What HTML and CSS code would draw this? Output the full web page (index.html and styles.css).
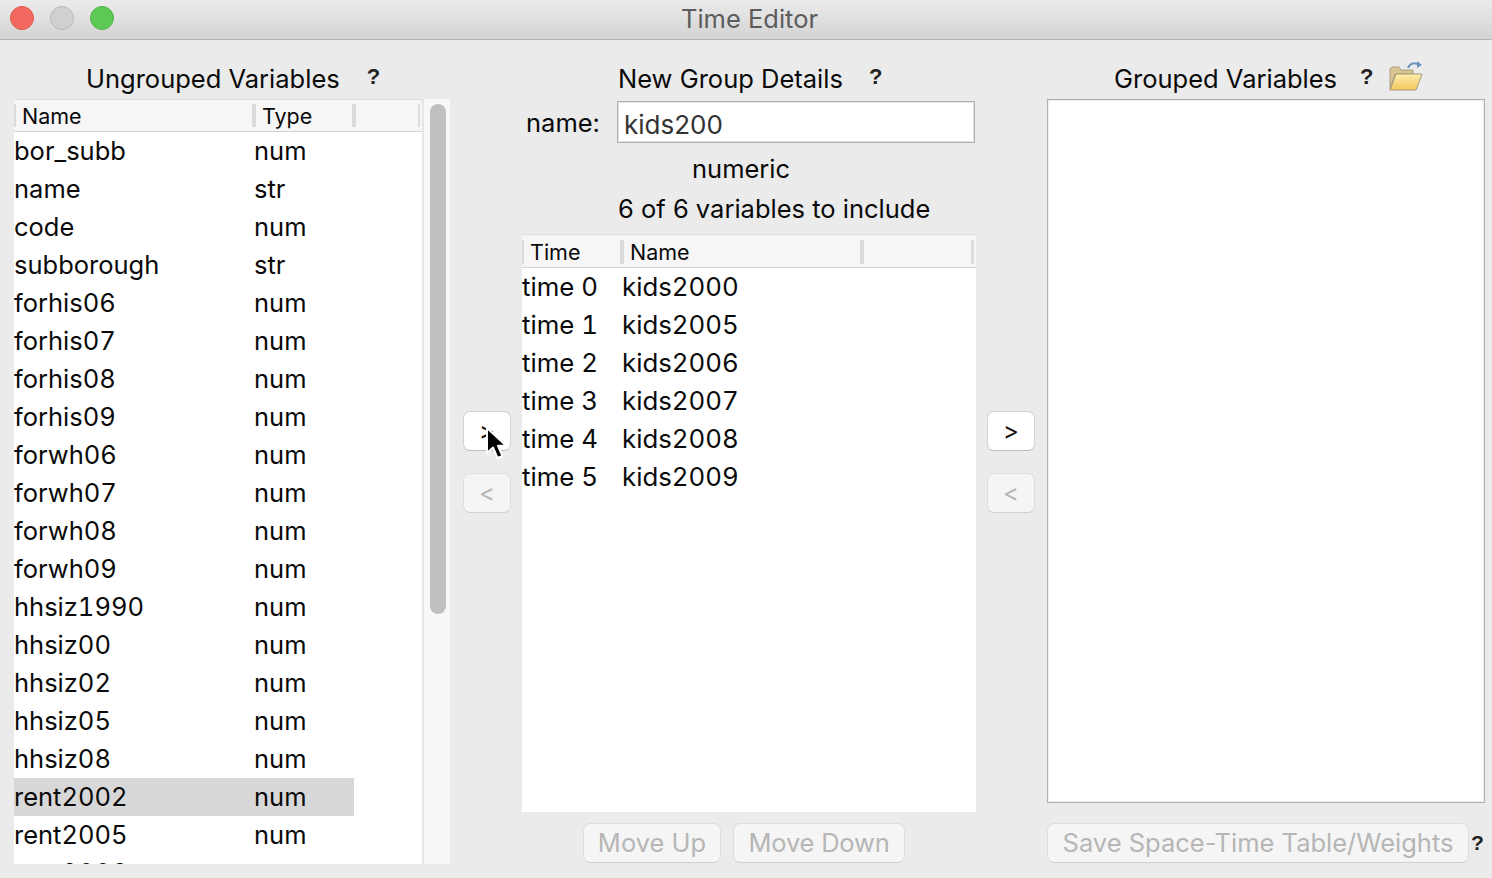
FILE: index.html
```html
<!DOCTYPE html>
<html lang="en">
<head>
<meta charset="utf-8">
<title>Time Editor</title>
<link rel="stylesheet" href="styles.css">
</head>
<body>
<div class="window">
  <header class="titlebar">
    <div class="lights">
      <span class="light red"></span>
      <span class="light grey"></span>
      <span class="light green"></span>
    </div>
    <div class="title">Time Editor</div>
  </header>
  <main class="main">
    <section class="col">
      <div class="heading head-left"><span>Ungrouped Variables</span><b class="help">?</b></div>
      <div class="var-panel">
        <div class="list">
          <div class="thead thead-left">
            <span class="th th-name">Name</span><span class="th th-type">Type</span><span class="th th-end"></span>
          </div>
          <div class="rows">
            <div class="row"><span>bor_subb</span><span>num</span></div>
            <div class="row"><span>name</span><span>str</span></div>
            <div class="row"><span>code</span><span>num</span></div>
            <div class="row"><span>subborough</span><span>str</span></div>
            <div class="row"><span>forhis06</span><span>num</span></div>
            <div class="row"><span>forhis07</span><span>num</span></div>
            <div class="row"><span>forhis08</span><span>num</span></div>
            <div class="row"><span>forhis09</span><span>num</span></div>
            <div class="row"><span>forwh06</span><span>num</span></div>
            <div class="row"><span>forwh07</span><span>num</span></div>
            <div class="row"><span>forwh08</span><span>num</span></div>
            <div class="row"><span>forwh09</span><span>num</span></div>
            <div class="row"><span>hhsiz1990</span><span>num</span></div>
            <div class="row"><span>hhsiz00</span><span>num</span></div>
            <div class="row"><span>hhsiz02</span><span>num</span></div>
            <div class="row"><span>hhsiz05</span><span>num</span></div>
            <div class="row"><span>hhsiz08</span><span>num</span></div>
            <div class="row selected"><span>rent2002</span><span>num</span></div>
            <div class="row"><span>rent2005</span><span>num</span></div>
            <div class="row"><span>rent2006</span><span>num</span></div>
          </div>
        </div>
        <div class="scrollbar"><div class="thumb"></div></div>
      </div>
    </section>

    <div class="movers">
      <button class="btn small">&gt;</button>
      <button class="btn small off">&lt;</button>
      <svg class="cursor" width="24" height="36" viewBox="0 0 24 36">
        <path d="M2 1 L2 26 L8 20.5 L12.5 31 L17.5 29 L13 18.8 L21 18.5 Z" fill="#000" stroke="#fff" stroke-width="2" stroke-linejoin="round"/>
      </svg>
    </div>

    <section class="col">
      <div class="heading head-mid"><span>New Group Details</span><b class="help">?</b></div>
      <div class="name-row">
        <label class="name-label">name:</label>
        <div class="name-input">kids200</div>
      </div>
      <div class="line line-type">numeric</div>
      <div class="line line-count">6 of 6 variables to include</div>
      <div class="list list-mid">
        <div class="thead thead-mid">
          <span class="th tm-time">Time</span><span class="th tm-name">Name</span><span class="th tm-fill"></span><span class="th tm-end"></span>
        </div>
        <div class="rows">
          <div class="row row-mid"><span>time 0</span><span>kids2000</span></div>
          <div class="row row-mid"><span>time 1</span><span>kids2005</span></div>
          <div class="row row-mid"><span>time 2</span><span>kids2006</span></div>
          <div class="row row-mid"><span>time 3</span><span>kids2007</span></div>
          <div class="row row-mid"><span>time 4</span><span>kids2008</span></div>
          <div class="row row-mid"><span>time 5</span><span>kids2009</span></div>
        </div>
      </div>
      <div class="foot foot-mid">
        <button class="btn off up">Move Up</button>
        <button class="btn off down">Move Down</button>
      </div>
    </section>

    <div class="movers">
      <button class="btn small">&gt;</button>
      <button class="btn small off">&lt;</button>
    </div>

    <section class="col col-right">
      <div class="heading head-right">
        <span>Grouped Variables</span><b class="help">?</b>
        <svg class="folder" width="34" height="32" viewBox="0 0 34 32">
          <defs>
            <linearGradient id="fg" x1="0" y1="0" x2="0" y2="1">
              <stop offset="0" stop-color="#fdeeb0"/>
              <stop offset="1" stop-color="#f2c75c"/>
            </linearGradient>
          </defs>
          <path d="M1 29 L1 9 L3 7 L10 7 L12 10 L24 10 L24 14 L6 14 Z" fill="#d9c68e" stroke="#a8a08a" stroke-width="1"/>
          <path d="M1 30 L7 14 L33 14 L27 30 Z" fill="url(#fg)" stroke="#a89a72" stroke-width="1"/>
          <path d="M19 8 C21 3 26 2 30 5" fill="none" stroke="#6f94bd" stroke-width="2"/>
          <path d="M28 1 L33 5 L28 8 Z" fill="#6f94bd"/>
        </svg>
      </div>
      <div class="group-box"></div>
      <div class="foot foot-right">
        <button class="btn off save">Save Space-Time Table/Weights</button>
        <b class="help help-save">?</b>
      </div>
    </section>
  </main>
</div>
</body>
</html>
```
FILE: styles.css
```css
* { box-sizing: border-box; }
html, body { margin: 0; height: 100%; overflow: hidden; }
body { font-family: Inter, "Liberation Sans", sans-serif; color: #0a0a0a; background: #ebebeb; }
.window { width: 1492px; height: 878px; display: flex; flex-direction: column; overflow: hidden; }

.titlebar {
  height: 40px; flex: none; position: relative; display: flex; align-items: center; justify-content: center;
  background: linear-gradient(#ebebeb, #d3d3d3); border-bottom: 1px solid #b4b4b4;
}
.lights { position: absolute; left: 10px; top: 6px; display: flex; gap: 16px; }
.light { width: 24px; height: 24px; border-radius: 50%; }
.red { background: #f2695f; border: 1px solid #dd5a50; }
.grey { background: #d0d0d0; border: 1px solid #b9b9b9; }
.green { background: #5dc853; border: 1px solid #50b548; }
.title { font-size: 25.5px; color: #5c5c5c; margin: -2px 0 0 7px; }

.main {
  flex: 1; min-height: 0; display: grid;
  grid-template-columns: 438px 48px 454px 48px 439px;
  column-gap: 11px; padding: 0 0 14px 14px;
}
.col { display: flex; flex-direction: column; min-height: 0; min-width: 0; }
.col-right { margin-left: 1px; }

.heading { height: 59px; flex: none; display: flex; align-items: center; font-size: 25.5px; padding-top: 18px; }
.head-left { padding-left: 72px; gap: 27px; }
.head-mid { padding-left: 96px; gap: 26px; }
.head-right { padding-left: 67px; gap: 23px; }
.help { font: bold 22px "Liberation Sans", sans-serif; color: #222; margin-top: -3px; }
.folder { margin: -6px 0 0 -8px; }

.var-panel { flex: 1; min-height: 0; display: flex; width: 436px; }
.list { background: #fff; min-height: 0; overflow: hidden; }
.var-panel .list { width: 408px; }
.scrollbar { width: 28px; background: #f8f8f8; border-left: 2px solid #e6e6e6; padding: 5px 4px 0 6px; }
.thumb { width: 16px; height: 510px; background: #c0c0c0; border-radius: 8px; }

.thead { height: 33px; display: flex; background: #f6f6f6; border-top: 1px solid #dcdcdc; border-bottom: 1px solid #d4d4d4; padding: 4px 0; font-size: 21.5px; align-items: stretch; }
.th { border-left: 2px solid #dcdcdc; display: flex; align-items: center; padding-left: 6px; flex: none; }
.th-name { width: 238px; }
.th-type { width: 100px; border-left-width: 4px; padding-left: 6px; }
.th-end { width: 68px; border-left-width: 4px; border-right: 2px solid #dcdcdc; }
.thead-mid { height: 34px; padding: 5px 0 3px; }
.tm-time { width: 98px; padding-left: 6px; }
.tm-name { width: 240px; border-left-width: 4px; padding-left: 6px; }
.tm-fill { width: 111px; border-left-width: 4px; }
.tm-end { width: 3px; padding: 0; border-left-width: 3px; }

.rows { font-size: 25.5px; font-variant-numeric: tabular-nums; }
.row { height: 38px; display: grid; grid-template-columns: 240px 100px; align-items: center; padding-bottom: 2px; width: 340px; white-space: nowrap; }
.row.selected { background: #d8d8d8; }
.row-mid { grid-template-columns: 100px 200px; width: auto; font-size: 25.8px; }

.movers { display: flex; flex-direction: column; gap: 22px; padding-top: 371px; position: relative; }
.cursor { position: absolute; left: 22px; top: 387px; }
.btn {
  font: inherit; background: #fff; color: #111; border: 1px solid #d2d2d2; border-bottom-color: #bdbdbd;
  border-radius: 7px; padding: 0 0 2px; height: 40px; display: block; white-space: nowrap;
}
.small { width: 48px; font-size: 24px; }
.off { background: #f5f5f5; color: #b6b6b6; border-color: #dedede; border-bottom-color: #cfcfcf; }

.name-row { display: flex; align-items: center; height: 44px; margin-top: 1px; flex: none; }
.name-label { width: 95px; padding-left: 4px; font-size: 25.5px; }
.name-input { width: 358px; height: 42px; background: #fff; border: 1px solid #b0b0b0; box-shadow: inset 0 0 0 1px #e2e2e2; padding: 5px 0 0 6px; font-size: 26px; color: #333; display: flex; align-items: center; }
.line { font-size: 25.5px; height: 40px; flex: none; display: flex; align-items: center; }
.line-type { padding-left: 170px; margin-top: 4px; }
.line-count { padding-left: 96px; }
.list-mid { flex: 1; margin-top: 6px; }

.foot { flex: none; display: flex; height: 40px; margin: 11px 0 1px; font-size: 25.5px; }
.foot-mid { padding-left: 61px; gap: 12px; }
.up { width: 138px; }
.down { width: 172px; letter-spacing: -0.2px; }
.group-box { flex: 1; min-height: 0; background: #fff; border: 1px solid #b0b0b0; box-shadow: inset 0 0 0 1px #ececec; }
.foot-right { margin-top: 20px; align-items: center; gap: 2px; }
.save { width: 422px; flex: none; }
.help-save { margin: 0; font-size: 21px; }
```
